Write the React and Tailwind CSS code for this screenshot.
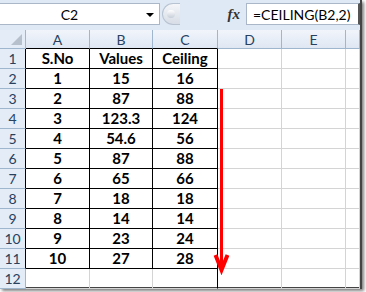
import React from 'react'

const cols = ['A', 'B', 'C', 'D', 'E', '']
const widths = ['w-[64px]', 'w-[63px]', 'w-[65px]', 'w-[64px]', 'w-[64px]', 'flex-1']

const data = [
  ['S.No', 'Values', 'Ceiling'],
  ['1', '15', '16'],
  ['2', '87', '88'],
  ['3', '123.3', '124'],
  ['4', '54.6', '56'],
  ['5', '87', '88'],
  ['6', '65', '66'],
  ['7', '18', '18'],
  ['8', '14', '14'],
  ['9', '23', '24'],
  ['10', '27', '28'],
  ['', '', ''],
]

function FormulaBar() {
  return (
    <div className="flex h-[28px] items-stretch bg-[#dfe8f5] pt-[3px] pb-[3px]">
      <div className="relative flex w-[160px] items-center justify-center border border-l-0 border-[#a9b7c9] bg-white text-[14px] text-black">
        <span className="mr-[20px]">C2</span>
        <span className="absolute right-[5px] top-[9px] h-0 w-0 border-x-[4px] border-t-[4px] border-x-transparent border-t-black" />
      </div>
      <div className="ml-[2px] flex w-[18px] items-center rounded-l-full border border-r-0 border-[#b8c3d1] bg-gradient-to-b from-[#f4f6f9] to-[#d7dde6] pl-[4px]">
        <span className="h-[8px] w-[8px] rounded-full bg-gradient-to-b from-[#ffffff] to-[#c7ced8]" />
      </div>
      <div className="flex w-[66px] items-center justify-end bg-[#dfe8f5] pr-[6px]">
        <span className="font-['Liberation_Serif',serif] text-[15px] font-bold italic text-[#333]">fx</span>
      </div>
      <div className="flex flex-1 items-center border border-r-2 border-[#a9b7c9] border-r-[#555] bg-white pl-[6px] text-[14px] text-black">
        =CEILING(B2,2)
      </div>
    </div>
  )
}

export default function App() {
  return (
    <div className="h-[292px] w-[366px] overflow-hidden bg-white font-['Lato','Liberation_Sans',sans-serif]">
      <div className="mr-[4px] h-[289px] border-r-2 border-b-2 border-[#444] shadow-[2px_2px_3px_rgba(0,0,0,0.5)]">
        <FormulaBar />
        <div className="h-[2px] bg-[#dfe8f5]" />
        {/* column headers */}
        <div className="flex h-[19px]">
          <div className="relative w-[26px] border-r border-b border-[#9eb6ce] bg-[#e4ecf7]">
            <span className="absolute right-[3px] bottom-[3px] h-0 w-0 border-l-[11px] border-b-[11px] border-l-transparent border-b-[#b6c0cc]" />
          </div>
          {cols.map((c, i) => (
            <div
              key={i}
              className={`${widths[i]} flex items-center justify-center border-r border-b bg-gradient-to-b from-[#f1f5fb] to-[#dfe7f3] text-[14px] text-[#27415f] ${i < 3 ? 'border-b-black border-r-[#9eb6ce]' : 'border-[#9eb6ce]'}`}
            >
              {c}
            </div>
          ))}
        </div>
        {data.map((row, r) => (
          <div key={r} className="flex h-[20px]">
            <div
              className={`w-[26px] flex items-center justify-center border-r border-b border-b-[#9eb6ce] bg-[#e4ecf7] text-[14px] text-[#27415f] ${r < 11 ? 'border-r-black' : 'border-r-[#9eb6ce]'}`}
            >
              {r + 1}
            </div>
            {cols.map((c, i) => {
              const inTable = i < 3 && r < 11
              return (
                <div
                  key={i}
                  className={`${widths[i]} relative flex items-center justify-center border-r border-b text-[15px] font-bold text-black ${
                    inTable ? 'border-black' : i === 2 ? 'border-r-black border-b-[#d4d4d4]' : 'border-[#d4d4d4]'
                  } ${r === 11 && i < 3 ? 'border-r-[#d4d4d4]' : ''}`}
                >
                  {i < 3 ? row[i] : ''}
                </div>
              )
            })}
          </div>
        ))}
      </div>
      {/* red arrow over the sheet */}
      <svg className="absolute left-[213px] top-[89px]" width="18" height="186" viewBox="0 0 18 186">
        <line x1="8.5" y1="0" x2="8.5" y2="178" stroke="#ff0000" strokeWidth="3" />
        <polyline points="2.5,166 8.5,181 14.5,166" fill="none" stroke="#ff0000" strokeWidth="4" strokeLinejoin="miter" />
      </svg>
    </div>
  )
}
